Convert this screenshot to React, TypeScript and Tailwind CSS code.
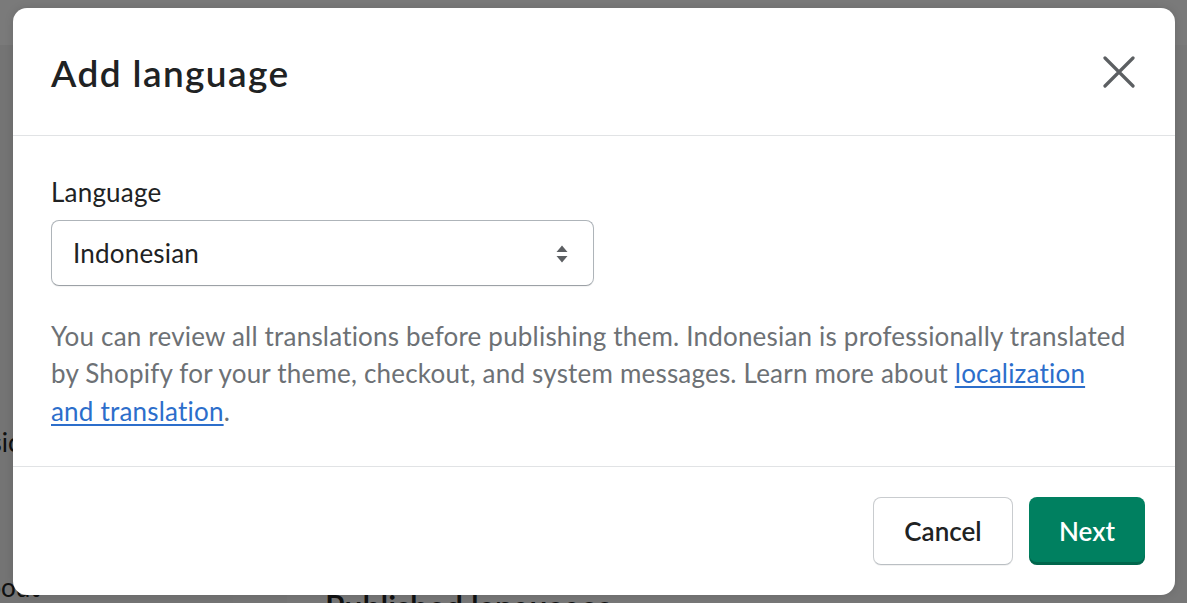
import React from "react";

const font = { fontFamily: '"Segoe UI", Lato, "Noto Sans", sans-serif' };

function CloseIcon() {
  return (
    <svg width="32" height="32" viewBox="0 0 32 32" fill="none">
      <path
        d="M2 2 L30 30 M30 2 L2 30"
        stroke="#5c5f62"
        strokeWidth="3.2"
        strokeLinecap="round"
      />
    </svg>
  );
}

function SelectArrows() {
  return (
    <svg width="14" height="20" viewBox="0 0 14 20" fill="#5c5f62">
      <path d="M7 1.5 L12.5 8 H1.5 Z" />
      <path d="M7 18.5 L12.5 12 H1.5 Z" />
    </svg>
  );
}

export default function App() {
  return (
    <div className="relative h-[603px] w-[1187px] overflow-hidden bg-[#eeeeee]" style={font}>
      {/* Page underneath the dialog */}
      <div className="flex h-full flex-col">
        <div className="h-[45px] shrink-0 bg-[#f4f4f4]" />
        <div className="flex min-h-0 flex-1">
          <aside className="flex w-[233px] shrink-0 flex-col overflow-hidden bg-[#e8e8e8] pt-[379px] text-[26px] text-[#202223]">
            <div className="-ml-[39px] whitespace-nowrap leading-[37px]">Basic</div>
            <div className="-ml-[31px] mt-[108px] whitespace-nowrap leading-[37px]">About</div>
          </aside>
          <div className="w-[54px] shrink-0 bg-[#ebebeb]" />
          <main className="flex flex-1 flex-col px-[38px]">
            <div className="mt-[542px] whitespace-nowrap text-[32px] font-semibold leading-[40px] text-[#202223]">
              Published languages
            </div>
          </main>
        </div>
      </div>

      {/* Backdrop + dialog */}
      <div className="absolute inset-0 z-10 flex items-start justify-start bg-black/50 pl-[13px] pt-[8px]">
        <div className="flex h-[587px] w-[1162px] flex-col overflow-hidden rounded-[14px] bg-white shadow-[0_0_10px_rgba(0,0,0,0.12)]">
          <header className="flex h-[128px] shrink-0 items-center justify-between border-b border-[#e1e3e5] pl-[38px] pr-[38px]">
            <h2 className="pt-[3px] text-[37px] font-semibold leading-[48px] tracking-[1.4px] text-[#202223]">
              Add language
            </h2>
            <button className="-mr-[2px] flex h-[40px] w-[40px] items-center justify-center">
              <CloseIcon />
            </button>
          </header>

          <section className="flex shrink-0 flex-col border-b border-[#e1e3e5] px-[38px] pb-[36px] pt-[38px] text-[26px] leading-[37.5px] tracking-[0.2px]">
            <label className="text-[#202223]">Language</label>
            <div className="mt-[8px] flex h-[66px] w-[543px] items-center justify-between rounded-[8px] border border-[#aeb4b9] border-b-[#9ca1a6] pl-[21px] pr-[24px] pt-[3px] text-[#202223] shadow-[0_1px_1px_rgba(0,0,0,0.05)]">
              <span>Indonesian</span>
              <SelectArrows />
            </div>
            <p className="mt-[32px] w-[1080px] text-[#6d7175]">
              You can review all translations before publishing them. Indonesian is professionally translated by Shopify for your theme, checkout, and system messages. Learn more about{" "}
              <a className="text-[#2c6ecb] underline decoration-[1.5px] underline-offset-[3px]" href="#">
                localization and translation
              </a>
              .
            </p>
          </section>

          <footer className="flex flex-1 items-start justify-end gap-[16px] pr-[30px] pt-[30px]">
            <button className="h-[68px] w-[140px] rounded-[8px] border border-[#c9cccf] border-b-[#babfc3] bg-white pt-[1px] text-[26px] font-semibold text-[#202223] shadow-[0_1px_0_rgba(0,0,0,0.05)]">
              Cancel
            </button>
            <button className="h-[68px] w-[116px] rounded-[8px] bg-[#008060] pt-[1px] text-[26px] font-semibold text-white shadow-[inset_0_-3px_0_rgba(0,0,0,0.2)]">
              Next
            </button>
          </footer>
        </div>
      </div>
    </div>
  );
}
